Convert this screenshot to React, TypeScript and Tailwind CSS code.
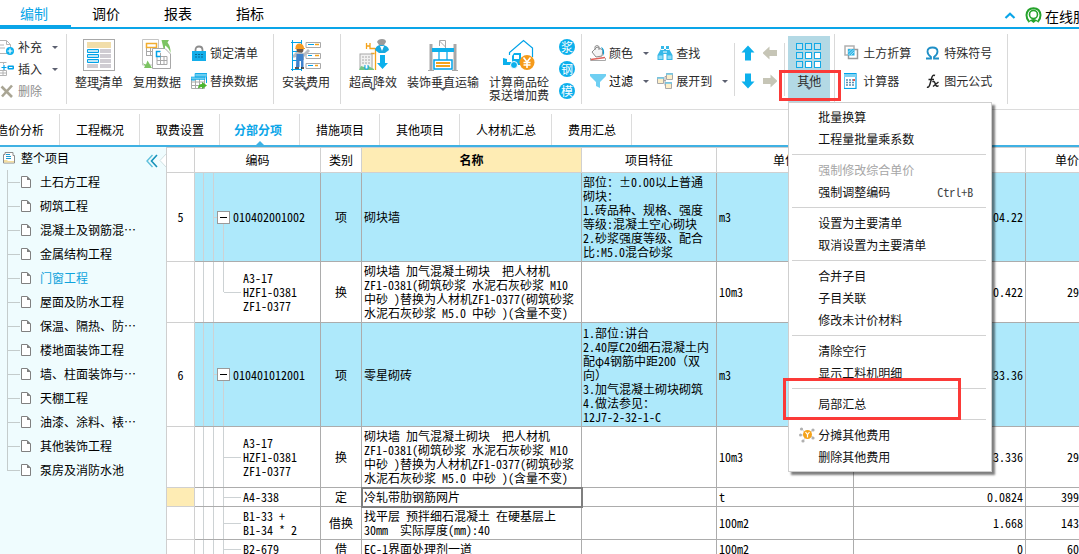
import React from 'react';

const BLUE = '#00a2e8';

/* ---------- icons ---------- */

function Caret() {
  return (
    <svg width="6" height="3" viewBox="0 0 6 3" className="shrink-0" aria-hidden="true">
      <path d="M0 0H6L3 3Z" fill="#5c6070" />
    </svg>
  );
}

function AddIcon() {
  return (
    <svg width="14" height="16" viewBox="0 0 14 16" aria-hidden="true">
      <path d="M0 1.5H6.5L10.500 5.500V14.500H0" fill="#fff" stroke="#b4b4b4" />
      <path d="M6.500 1.500V5.500H10.500M0 6H4M0 9H5" fill="none" stroke="#b4b4b4" />
      <circle cx="10" cy="12" r="4" fill="#0cb0ec" />
      <path d="M10 9.500V14.500M7.500 12H12.500" stroke="#fff" strokeWidth="1.200" />
    </svg>
  );
}

function InsertIcon() {
  return (
    <svg width="14" height="16" viewBox="0 0 14 16" aria-hidden="true">
      <path d="M0 1.500H6.500M3.500 1.500V3.500M0 9.500H6.500V14.500H0M0 12H6.500M3 9.500V14.500" fill="none" stroke="#b4b4b4" />
      <path d="M4 4V9M1.500 6.500H6.500" stroke={BLUE} strokeWidth="1.200" />
      <rect x="7.500" y="4.500" width="6.500" height="4" rx="1" fill={BLUE} />
      <path d="M9 6.500H12.500" stroke="#fff" />
    </svg>
  );
}

function RemoveIcon() {
  return (
    <svg width="14" height="16" viewBox="0 0 14 16" aria-hidden="true">
      <path d="M1.500 3.500L12 14M12 2.500L2 13.500" stroke="#a9a594" strokeWidth="2.600" />
    </svg>
  );
}

function TidyIcon() {
  return (
    <svg width="32" height="32" viewBox="0 0 32 32" aria-hidden="true">
      <rect x=".5" y=".5" width="31" height="31" fill="#fff" stroke="#a8a8a8" />
      <rect x="4" y="3" width="24" height="6" fill="#f1dda9" />
      <path d="M17 10H28V14H17ZM17 15H28V19H17ZM17 20H28V24H17ZM4 25H15V29H4ZM17 25H28V29H17Z" fill="#cfccd2" />
      <path d="M4.500 10.500H15.500V13.500H4.500ZM4.500 15.500H15.500V18.500H4.500ZM4.500 20.500H15.500V23.500H4.500Z" fill="#bfe6f6" stroke={BLUE} />
    </svg>
  );
}

function ReuseIcon() {
  return (
    <svg width="32" height="32" viewBox="0 0 32 32" aria-hidden="true">
      <path d="M1.500 .5H17.500V26H1.500Z" fill="#fff" stroke="#c4c4c4" />
      <path d="M5 8.500H16M5 12.500H16M5 16.500H16M5.500 5V17M9.500 5V17M13.500 5V17" stroke="#a8a8a8" />
      <rect x="5.500" y="4.500" width="10" height="4" fill="#fff" stroke="#f2ad2e" strokeWidth="1.500" />
      <path d="M11.500 9.500H24L29.500 15V29.500H11.500Z" fill="#fff" stroke="#a8a8a8" />
      <path d="M16 17.500H26V25.500H16ZM16 21.500H26M19.500 14V25M23 17V25" fill="none" stroke="#a8a8a8" />
      <path d="M19.500 12.500H15.500V17.500H19.500" fill="none" stroke={BLUE} strokeWidth="1.500" />
      <path d="M24 9.500H22.500L20.500 1H28L26.500 3.500Q30 8 29.500 14Q28 8.500 24 6.500Z" fill="#7cc462" />
      <path d="M.5 17.500L1 22Q2.500 25.500 5 25.500L6.500 21.500L11 29H3L4 27Q1 24.500 .5 17.500Z" fill="#7cc462" />
    </svg>
  );
}

function LockIcon() {
  return (
    <svg width="16" height="16" viewBox="0 0 16 16" aria-hidden="true">
      <path d="M4.500 7V5Q4.500 1.500 8 1.500T11.500 5V7" fill="none" stroke="#8c8c8c" strokeWidth="1.800" />
      <rect x="1" y="6" width="14" height="10" fill="#13aeea" />
      <path d="M4 9.500H12M4 12H12" stroke="#0a6a95" strokeDasharray="2 1" />
    </svg>
  );
}

function ReplaceIcon() {
  return (
    <svg width="16" height="16" viewBox="0 0 16 16" aria-hidden="true">
      <path d="M.5 4.500H13.500V15.500H.5ZM.5 9H13M.5 12.500H10M4.500 5V15M8.500 5V15" fill="#fff" stroke="#a8a8a8" />
      <path d="M4.500 .5H15.500V10M.5 4.500V7H4" fill="none" stroke={BLUE} />
      <path d="M4 .5H16V4H4ZM0 4H14V6.500H0Z" fill="#6bcdf0" stroke={BLUE} strokeWidth=".6" />
      <path d="M7 15.500Q7 11 11 11V9L16 12.500L11 16V14Q8.500 14 7 15.500Z" fill="#4cb52e" />
    </svg>
  );
}

function InstallIcon() {
  return (
    <svg width="32" height="32" viewBox="0 0 32 32" aria-hidden="true">
      <path d="M2.500 1V32M11.500 1V32M1 3.500H12M2 12.500H12M2 21.500H12M1 30.500H12" stroke={BLUE} />
      <path d="M16 3.500H30.500V8.500H16ZM16 14.500H30.500V19.500H16ZM16 24.500H30.500V29.500H16Z" fill="#fff" stroke="#a8a8a8" />
      <path d="M18 5.500H24M18 16.500H22M18 26.500H23" stroke={BLUE} />
      <path d="M25 5.500H29M25 16.500H29M25 26.500H28" stroke="#f5a31a" strokeWidth="1.500" />
      <circle cx="10" cy="10.500" r="3.500" fill="#6e5a4c" />
      <path d="M5.500 9Q5.500 4.500 9.500 4.500T14 9H15V10H5Z" fill="#f59a22" />
      <path d="M3 16L6 13L14 14L18 10L20 12L14 18V21H6V18Q2 20 3 16Z" fill="#b9bdc3" />
      <path d="M6.500 15H13.500V28H11V22H9.500V28H6Z" fill="#3e82cc" />
      <path d="M5 29H9M11 29H14" stroke="#222" strokeWidth="1.500" />
    </svg>
  );
}

function HighIcon() {
  return (
    <svg width="32" height="32" viewBox="0 0 32 32" aria-hidden="true">
      <path d="M9.500 4V10M13 4V10M9.500 7H13V9.500H18M18.500 9V31M14 14.500H17.500M14.500 14V31" fill="none" stroke="#f5a31a" strokeWidth="1.300" />
      <rect x="3" y="15" width="12" height="15" fill="#f1f1f1" stroke="#a8a8a8" />
      <path d="M5 18H13M5 21H13M5 24H13" stroke="#a8a8a8" strokeDasharray="2 1" />
      <path d="M2 31L4 27L7 28L10 26L13 28L17 30V31Z" fill="#75c486" />
      <path d="M8 26V30H11V26" stroke={BLUE} fill="#fff" />
      <path d="M20 3Q21 0 25 0T29 3L27 6Q25 8 22 6Z" fill="#9b9b9b" />
      <path d="M18 11Q19 6 24 6Q31 6 32 11L28 14H22Z" fill="#18a9df" />
      <path d="M23 7L25 12L27 7Z" fill="#fff" />
      <path d="M23 16H28V24H31L25.500 30L20 24H23Z" fill="#0cb0ec" />
    </svg>
  );
}

function DecorIcon() {
  return (
    <svg width="32" height="32" viewBox="0 0 32 32" aria-hidden="true">
      <path d="M4 5V31M28 5V31" stroke="#a8a8a8" strokeWidth="3" />
      <path d="M1 31.500H7M25 31.500H31" stroke="#a8a8a8" />
      <path d="M12.500 7V1.500H18.500V9M12.500 2L18.500 8" fill="none" stroke="#a8a8a8" />
      <rect x="5" y="9" width="22" height="4" fill="#0cb0ec" />
      <path d="M12 13V21M20 13V21" stroke={BLUE} strokeWidth="1.200" />
      <rect x="7" y="21" width="18" height="9" fill="#fff" stroke={BLUE} strokeWidth="1.500" />
      <path d="M9 24H23M9 27H23" stroke="#f5a31a" strokeWidth="2" />
    </svg>
  );
}

function PumpIcon() {
  return (
    <svg width="32" height="32" viewBox="0 0 32 32" aria-hidden="true">
      <path d="M6.500 16V13.500L20.500 1.500L29.500 9V18" fill="none" stroke={BLUE} strokeWidth="1.200" />
      <path d="M0 19L4 20V23H9V17L11 14H18V26H0Z" fill="#0cb0ec" />
      <rect x="11" y="16" width="5" height="4" fill="#fff" />
      <circle cx="11" cy="26" r="3.500" fill="#0cb0ec" stroke="#fff" />
      <circle cx="24" cy="23.500" r="7.500" fill="#f59a1a" />
      <path d="M20.500 18.500L24 23L27.500 18.500M24 23V29M20.500 23.500H27.500M20.500 26H27.500" fill="none" stroke="#fff" strokeWidth="1.600" />
    </svg>
  );
}

function ColorIcon() {
  return (
    <svg width="16" height="16" viewBox="0 0 16 16" aria-hidden="true">
      <path d="M2 7L7 2L13 5L12 11L6 12Z" fill="#f4f4f4" stroke="#8c8c8c" />
      <path d="M5 5V1.500Q7 -.5 9 1.500V5" fill="none" stroke="#8c8c8c" />
      <path d="M11 2Q15 3 14 11Q12.500 8 12.500 5Z" fill="#0c9fd6" />
      <path d="M.5 13V15.500H15.500V13" fill="#fff" stroke="#a8a8a8" />
      <path d="M1 14.500Q8 13.500 15 12.500" stroke="#e0625a" strokeWidth="1.300" fill="none" />
    </svg>
  );
}

function FilterIcon() {
  return (
    <svg width="16" height="16" viewBox="0 0 16 16" aria-hidden="true">
      <path d="M0 1H16V3L10 9V15L6 13V9L0 3Z" fill="#6fcff2" />
    </svg>
  );
}

function FindIcon() {
  return (
    <svg width="16" height="16" viewBox="0 0 16 16" aria-hidden="true">
      <path d="M4 1H7V4H9V1H12V4L15.500 10V15H9.500V9H6.500V15H.5V10L4 4Z" fill="#35b8e8" />
      <path d="M1.500 10.500H5.500V14H1.500ZM10.500 10.500H14.500V14H10.500Z" fill="#8fdcf6" />
      <path d="M4 4.500H7M9 4.500H12M6 7H10" stroke="#fff" />
    </svg>
  );
}

function ExpandIcon() {
  return (
    <svg width="16" height="16" viewBox="0 0 16 16" aria-hidden="true">
      <path d="M6 7.500H9M8 7.500V12.500H9M8 7.500V3.500H9" fill="none" stroke="#a8a8a8" />
      <path d="M.5 4.500H6.500V10.500H.5ZM9.500 .5H15.500V6.500H9.500ZM8.500 9.500H14.500V15.500H8.500Z" fill="#fdeec8" stroke="#a8a8a8" />
      <path d="M0 5H7M9 1H16M8 10H15" stroke="#6cc7ea" strokeWidth="1.500" />
    </svg>
  );
}

function ArrowIcon({ dir, color }: { dir: number; color: string }) {
  return (
    <svg width="14" height="16" viewBox="0 0 14 16" aria-hidden="true">
      <path d="M7 .5L13.500 7.500H10V15.500H4V7.500H.5Z" fill={color} transform={`rotate(${dir} 7 8)`} />
    </svg>
  );
}

function GridIcon() {
  const cells = [0, 1, 2].flatMap((r) => [0, 1, 2].map((c) => [c, r]));
  return (
    <svg width="26" height="26" viewBox="0 0 26 26" aria-hidden="true">
      {cells.map(([c, r]) => (
        <rect key={`${c}-${r}`} x={0.5 + c * 9} y={0.5 + r * 9} width="6" height="6" fill={r > 0 && c > 0 ? '#fff' : '#c3e3ee'} stroke="#12a9e6" />
      ))}
    </svg>
  );
}

function EarthIcon() {
  return (
    <svg width="16" height="16" viewBox="0 0 16 16" aria-hidden="true">
      <rect x="1" y="1" width="9" height="9" fill="#fff" stroke="#b0b0b0" strokeWidth="1.500" />
      <rect x="4.500" y="4.500" width="9" height="9" fill="#fff" stroke="#9a9a9a" strokeWidth="1.500" />
      <rect x="4" y="4" width="6.500" height="6.500" fill="#2cb3e4" />
      <path d="M4 7.500L7.500 4M4.500 10L10 4.500M7 10L10 7" stroke="#bfeafa" strokeWidth=".8" />
    </svg>
  );
}

function CalcIcon() {
  return (
    <svg width="16" height="16" viewBox="0 0 16 16" aria-hidden="true">
      <rect x="0" y=".5" width="12" height="15" fill="#fff" stroke={BLUE} strokeWidth="1.200" />
      <rect x="0" y="1" width="12" height="3" fill="#7fd2f1" />
      <path d="M2 7H11M2 9.500H11M2 12H11" stroke="#5a8fb0" strokeWidth="1.300" strokeDasharray="2 1" />
      <path d="M9 6H11V8H9Z" fill="#e8594f" />
    </svg>
  );
}

function OmegaIcon() {
  return (
    <svg width="16" height="16" viewBox="0 0 16 16" aria-hidden="true">
      <path d="M1 13.500H6V12Q2.500 9.500 2.500 6.500Q2.500 2.500 7.500 2.500T12.500 6.500Q12.500 9.500 9 12V13.500H14" fill="none" stroke="#1f8fc6" strokeWidth="1.800" />
    </svg>
  );
}

function FxIcon() {
  return (
    <svg width="16" height="16" viewBox="0 0 16 16" aria-hidden="true">
      <path d="M2 14Q4 15 5 11L7 4Q8 1.500 10 2.500M3.500 6.500H9M7.500 9Q9 7.500 10 10L11 12.500Q12 14 13.500 12.500M13.500 9L8 13.500" fill="none" stroke="#222" strokeWidth="1.400" />
    </svg>
  );
}

function HeadsetIcon() {
  return (
    <svg width="17" height="17" viewBox="0 0 17 17" className="shrink-0" aria-hidden="true">
      <path d="M4 14.500Q1.500 12 1.500 8Q2 1.500 8.500 1.200Q15 1.500 15.500 8Q15.500 12 13 14.500" fill="none" stroke="#26a32c" strokeWidth="2" />
      <circle cx="8.500" cy="7.500" r="4" fill="none" stroke="#26a32c" strokeWidth="1.600" />
      <path d="M3 16Q5 12 8.500 12T14 16L11 14L8.500 16L6 14Z" fill="#26a32c" />
    </svg>
  );
}

function ProjectIcon() {
  return (
    <svg width="12" height="13" viewBox="0 0 12 13" aria-hidden="true">
      <path d="M.5 3.500V12H11.500V4.500H10V1.500H2V3.500Z" fill="#fff" stroke="#8c8c8c" />
      <path d="M3 3.500H7M3 5.500H8M3 7.500H8" stroke="#1b9bd0" />
      <path d="M1 9H4L5 10H11V11.500H1Z" fill="#f3dea0" />
    </svg>
  );
}

function DocIcon() {
  return (
    <svg width="10" height="12" viewBox="0 0 10 12" className="shrink-0" aria-hidden="true">
      <path d="M.5 .5H6L9.500 4V11.500H.5Z" fill="#fff" stroke="#808080" />
      <path d="M6 0L10 4H6Z" fill="#808080" />
    </svg>
  );
}

function SplitIcon() {
  return (
    <svg width="16" height="16" viewBox="0 0 16 16" aria-hidden="true">
      <path d="M3 2L8 8L14 3M1 8H8L14 10M4 14L8 8" stroke="#d4d4d4" fill="none" />
      <g fill="#b0b0b0">
        <circle cx="2.500" cy="2" r="1.600" />
        <circle cx="14" cy="3" r="1.600" />
        <circle cx="1.500" cy="8" r="1.500" />
        <circle cx="14" cy="11" r="1.600" />
        <circle cx="4" cy="14" r="1.600" />
      </g>
      <circle cx="8.500" cy="7.500" r="4.500" fill="#f5a31a" />
      <path d="M6.500 5L8.500 7.500L10.500 5M8.500 7.500V10.500" stroke="#fff" fill="none" strokeWidth="1.200" />
    </svg>
  );
}

/* ---------- ribbon ---------- */

function Divider({ short }: { short?: boolean }) {
  return <div className={short ? 'mt-[14px] h-[53px] w-px shrink-0 bg-[#d9d9d9]' : 'mt-[5px] h-[70px] w-px shrink-0 bg-[#d9d9d9]'} />;
}

function BigButton({ icon, lines, caret }: { icon: React.ReactNode; lines: string[]; caret?: boolean }) {
  return (
    <button className="flex shrink-0 flex-col items-center pt-[10px]">
      {icon}
      <span className="mt-[4px] flex flex-col leading-[13px]">
        {lines.map((l) => (
          <span key={l}>{l}</span>
        ))}
      </span>
      {caret && <Caret />}
    </button>
  );
}

function SmallButton({ icon, label, caret, strong }: { icon: React.ReactNode; label: string; caret?: boolean; strong?: boolean }) {
  return (
    <button className="flex h-7 items-center gap-[3px]">
      {icon}
      <span className={strong ? 'text-black' : ''}>{label}</span>
      {caret && (
        <span className="ml-[7px]">
          <Caret />
        </span>
      )}
    </button>
  );
}

const MENU: { label: string; off?: boolean; key?: string; icon?: boolean; marked?: boolean }[][] = [
  [{ label: '批量换算' }, { label: '工程量批量乘系数' }],
  [{ label: '强制修改综合单价', off: true }, { label: '强制调整编码', key: 'Ctrl+B' }],
  [{ label: '设置为主要清单' }, { label: '取消设置为主要清单' }],
  [{ label: '合并子目' }, { label: '子目关联' }, { label: '修改未计价材料' }],
  [{ label: '清除空行' }, { label: '显示工料机明细' }],
  [{ label: '局部汇总', marked: true }],
  [{ label: '分摊其他费用', icon: true }, { label: '删除其他费用' }],
];

function OtherMenu() {
  return (
    <div className="absolute left-0 top-[66px] z-20 w-[204px] border border-[#cfcfcf] bg-white py-[3px] text-[#111] shadow-[3px_3px_2px_rgba(0,0,0,0.5)]">
      {MENU.map((group, i) => (
        <div key={i}>
          {i > 0 && (
            <div className="flex h-[9px] items-center pl-[3px] pr-[5px]">
              <div className="h-px w-full bg-[#d2d2d2]" />
            </div>
          )}
          {group.map((m) => (
            <button
              key={m.label}
              disabled={m.off}
              className="relative flex h-[22px] w-full items-center pr-[18px] text-left disabled:text-[#a6a6a6]"
            >
              <span className="flex w-[29px] justify-center pl-[6px]">{m.icon && <SplitIcon />}</span>
              <span>{m.label}</span>
              {m.key && <span className="ml-auto text-[#444]">{m.key}</span>}
              {m.marked && <span className="absolute -left-[6px] -top-[15px] h-[42px] w-[178px] border-[3px] border-[#fb3a38]" />}
            </button>
          ))}
        </div>
      ))}
    </div>
  );
}

function Ribbon() {
  return (
    <div className="relative z-10 flex h-[81px] shrink-0 items-start whitespace-nowrap border-b border-[#dcdcdc] bg-white text-[#2b2b2b]">
      <div className="flex w-[66px] shrink-0 flex-col pt-[7px]">
        <button className="flex h-[22px] items-center gap-1 pr-2">
          <AddIcon />
          <span className="mr-auto">补充</span>
          <Caret />
        </button>
        <button className="flex h-[22px] items-center gap-1 pr-2">
          <InsertIcon />
          <span className="mr-auto">插入</span>
          <Caret />
        </button>
        <button disabled className="flex h-[22px] items-center gap-1 text-[#8e8e8e]">
          <RemoveIcon />
          <span>删除</span>
        </button>
      </div>
      <Divider />
      <div className="flex shrink-0 gap-[10px] pl-2 pr-[15px]">
        <BigButton icon={<TidyIcon />} lines={['整理清单']} caret />
        <BigButton icon={<ReuseIcon />} lines={['复用数据']} />
        <div className="flex flex-col pt-[10px]">
          <SmallButton icon={<LockIcon />} label="锁定清单" />
          <SmallButton icon={<ReplaceIcon />} label="替换数据" />
        </div>
      </div>
      <Divider />
      <div className="flex shrink-0 pl-2 pr-[10px]">
        <BigButton icon={<InstallIcon />} lines={['安装费用']} caret />
      </div>
      <Divider />
      <div className="flex shrink-0 gap-[10px] pl-2 pr-[6px]">
        <BigButton icon={<HighIcon />} lines={['超高降效']} caret />
        <BigButton icon={<DecorIcon />} lines={['装饰垂直运输']} caret />
        <BigButton icon={<PumpIcon />} lines={['计算商品砼', '泵送增加费']} />
        <div className="flex flex-col gap-[6px] pt-[10px]">
          {['浆', '钢', '模'].map((c) => (
            <button key={c} className="flex size-4 items-center justify-center rounded-full bg-[#0cb0ec] leading-none text-white">
              {c}
            </button>
          ))}
        </div>
      </div>
      <Divider />
      <div className="flex shrink-0 gap-2 pl-2 pr-[6px] pt-[10px]">
        <div className="flex flex-col">
          <SmallButton icon={<ColorIcon />} label="颜色" caret />
          <SmallButton icon={<FilterIcon />} label="过滤" caret strong />
        </div>
        <div className="flex flex-col">
          <SmallButton icon={<FindIcon />} label="查找" />
          <SmallButton icon={<ExpandIcon />} label="展开到" caret />
        </div>
      </div>
      <Divider short />
      <div className="grid shrink-0 grid-cols-2 gap-x-2 pl-[6px] pr-[7px] pt-[10px]">
        <button aria-label="上移" className="flex h-7 items-center"><ArrowIcon dir={0} color="#0cb0ec" /></button>
        <button aria-label="左移" className="flex h-7 items-center"><ArrowIcon dir={-90} color="#c6c5b6" /></button>
        <button aria-label="下移" className="flex h-7 items-center"><ArrowIcon dir={180} color="#0cb0ec" /></button>
        <button aria-label="右移" className="flex h-7 items-center"><ArrowIcon dir={90} color="#c6c5b6" /></button>
      </div>
      <Divider short />
      <div className="shrink-0 pl-[3px] pr-1 pt-[7px]">
        <div className="relative">
          <button className="flex h-[66px] w-[42px] flex-col items-center bg-[#b3d9e5] pt-[7px]">
            <GridIcon />
            <span className="mt-[5px] leading-[13px]">其他</span>
            <Caret />
          </button>
          <OtherMenu />
          <span className="pointer-events-none absolute -left-[9px] top-[34px] z-30 h-[31px] w-[62px] border-[3px] border-[#fb3a38]" />
        </div>
      </div>
      <Divider />
      <div className="flex shrink-0 gap-[14px] pl-[9px] pr-[15px] pt-[10px]">
        <div className="flex flex-col">
          <SmallButton icon={<EarthIcon />} label="土方折算" />
          <SmallButton icon={<CalcIcon />} label="计算器" />
        </div>
        <div className="flex flex-col">
          <SmallButton icon={<OmegaIcon />} label="特殊符号" />
          <SmallButton icon={<FxIcon />} label="图元公式" />
        </div>
      </div>
      <Divider />
    </div>
  );
}

/* ---------- sidebar ---------- */

const TREE = [
  '土石方工程', '砌筑工程', '混凝土及钢筋混…', '金属结构工程', '门窗工程', '屋面及防水工程', '保温、隔热、防…',
  '楼地面装饰工程', '墙、柱面装饰与…', '天棚工程', '油漆、涂料、裱…', '其他装饰工程', '泵房及消防水池',
];

function Sidebar() {
  return (
    <aside className="relative w-[166px] shrink-0 bg-[#effcfe]">
      <div className="flex h-[23px] items-center gap-[6px] pb-[2px] pl-[3px]">
        <ProjectIcon />
        <span>整个项目</span>
      </div>
      <ul>
        {TREE.map((t, i) => (
          <li key={t} className="flex h-6 items-stretch pl-[7px]">
            <span className="flex flex-col" aria-hidden="true">
              <span className="h-[13px] w-[13px] border-b border-l border-[#c4cccc]" />
              {i < TREE.length - 1 && <span className="w-px grow bg-[#c4cccc]" />}
            </span>
            <a href="#" className={i === 4 ? 'flex items-center gap-[9px] pl-px text-[#10a3dc]' : 'flex items-center gap-[9px] pl-px text-black'}>
              <DocIcon />
              {t}
            </a>
          </li>
        ))}
      </ul>
      <button aria-label="收起" className="absolute right-0 top-[5px] flex items-center">
        <svg width="12" height="14" viewBox="0 0 12 14" aria-hidden="true">
          <path d="M6.500 1L1 7L6.500 13" fill="none" stroke="#5fc0dc" strokeWidth="1.400" />
          <path d="M11 1L5.500 7L11 13" fill="none" stroke="#1592ba" strokeWidth="1.600" />
        </svg>
        <svg width="8" height="18" viewBox="0 0 8 18" aria-hidden="true">
          <path d="M8 2L2 8.500L8 15Z" fill="#fff" />
          <path d="M8 2L2 8.500L8 15" fill="none" stroke="#cfe0e2" />
        </svg>
      </button>
    </aside>
  );
}

/* ---------- grid ---------- */

type Row = {
  no: string; code: string; parent?: boolean; last?: boolean; kind: string; name: string; desc: string;
  unit: string; qty: string; price: string; h: string; current?: boolean;
};

const REPLACED = '砌块墙 加气混凝土砌块  把人材机\nZF1-0381(砌筑砂浆 水泥石灰砂浆 M10\n中砂 )替换为人材机ZF1-0377(砌筑砂浆\n水泥石灰砂浆 M5.0 中砂 )(含量不变)';

const ROWS: Row[] = [
  {
    no: '5', code: '010402001002', parent: true, kind: '项', name: '砌块墙', unit: 'm3', qty: '04.22', price: '', h: 'h-[89px]',
    desc: '部位：±0.00以上普通\n砌块：\n1.砖品种、规格、强度\n等级:混凝土空心砌块\n2.砂浆强度等级、配合\n比:M5.0混合砂浆',
  },
  { no: '', code: 'A3-17\nHZF1-0381\nZF1-0377', last: true, kind: '换', name: REPLACED, desc: '', unit: '10m3', qty: '0.422', price: '29', h: 'h-[61px]' },
  {
    no: '6', code: '010401012001', parent: true, kind: '项', name: '零星砌砖', unit: 'm3', qty: '33.36', price: '', h: 'h-[104px]',
    desc: '1.部位:讲台\n2.40厚C20细石混凝土内\n配φ4钢筋中距200（双\n向）\n3.加气混凝土砌块砌筑\n4.做法参见：\n12J7-2-32-1-C',
  },
  { no: '', code: 'A3-17\nHZF1-0381\nZF1-0377', kind: '换', name: REPLACED, desc: '', unit: '10m3', qty: '3.336', price: '29', h: 'h-[61px]' },
  { no: '', code: 'A4-338', kind: '定', name: '冷轧带肋钢筋网片', desc: '', unit: 't', qty: '0.0824', price: '399', h: 'h-[19px]', current: true },
  { no: '', code: 'B1-33 +\nB1-34 * 2', kind: '借换', name: '找平层 预拌细石混凝土 在硬基层上\n30mm  实际厚度(mm):40', desc: '', unit: '100m2', qty: '1.668', price: '143', h: 'h-[33px]' },
  { no: '', code: 'B2-679', kind: '借', name: 'EC-1界面处理剂一道', desc: '', unit: '100m2', qty: '0', price: '60', h: 'h-[19px]' },
];

function CodeCell({ row }: { row: Row }) {
  return (
    <div className="flex h-full items-stretch">
      <span className="w-[9px] border-r border-[#cdd2d4]" />
      <span className="w-[10px] border-r border-[#cdd2d4]" />
      {row.parent ? (
        <>
          <span className="h-px w-[3px] self-center bg-[#cdd2d4]" />
          <span className="flex w-[13px] flex-col">
            <span className="flex-1" />
            <button aria-label="折叠" className="flex size-[13px] items-center justify-center border border-[#9a9a9a] bg-white">
              <span className="h-px w-[7px] bg-black" />
            </button>
            <span className="w-[7px] flex-1 border-r border-[#cdd2d4]" />
          </span>
          <span className="self-center whitespace-pre pl-[3px]">{row.code}</span>
        </>
      ) : (
        <>
          <span className="flex w-[10px] flex-col">
            <span className="flex-1 border-r border-[#cdd2d4]" />
            <span className={row.last ? 'flex-1' : 'flex-1 border-r border-[#cdd2d4]'} />
          </span>
          <span className="h-px w-[17px] self-center bg-[#cdd2d4]" />
          <span className="self-center whitespace-pre pl-[2px]">{row.code}</span>
        </>
      )}
    </div>
  );
}

function Grid() {
  const head = 'h-[26px] border-y border-r border-[#d0d0d0] p-0 font-normal';
  const cell = 'border-b border-r border-[#acacac] py-0';
  return (
    <div className="min-w-0 grow overflow-hidden border-l border-[#cfcfcf]">
      <table className="w-full table-fixed border-separate border-spacing-0 leading-[14px]">
        <colgroup>
          <col className="w-[28px]" />
          <col className="w-[126px]" />
          <col className="w-[41px]" />
          <col className="w-[220px]" />
          <col className="w-[135px]" />
          <col className="w-[137px]" />
          <col className="w-[172px]" />
          <col />
        </colgroup>
        <thead>
          <tr>
            <th className={head} />
            <th className={head}>编码</th>
            <th className={head}>类别</th>
            <th className="h-[26px] border-y border-r border-[#d0d0d0] bg-[#feecb4] p-0 font-bold">名称</th>
            <th className={head}>项目特征</th>
            <th className={head}>单位</th>
            <th className={head} />
            <th className="h-[26px] border-y border-[#d0d0d0] p-0 text-right font-normal">单价</th>
          </tr>
        </thead>
        <tbody>
          {ROWS.map((r, i) => (
            <tr key={i} className={r.parent ? 'bg-[#aee9fb]' : 'bg-white'}>
              <td className={`${r.h} border-b border-r border-[#d0d0d0] p-0 text-center ${r.current ? 'bg-[#feecb4]' : 'bg-white'}`}>{r.no}</td>
              <td className={`${r.h} ${cell} px-0`}>
                <CodeCell row={r} />
              </td>
              <td className={`${cell} px-0 text-center`}>{r.kind}</td>
              <td className={`${cell} whitespace-pre pl-[2px] pr-0 ${r.current ? 'outline-2 -outline-offset-1 outline-[#7f7f7f]' : ''}`}>{r.name}</td>
              <td className={`${cell} whitespace-pre pl-px pr-0`}>{r.desc}</td>
              <td className={`${cell} pl-[2px] pr-0`}>{r.unit}</td>
              <td className={`${cell} pl-0 pr-[2px] text-right`}>{r.qty}</td>
              <td className="border-b border-[#acacac] p-0 text-right">{r.price}</td>
            </tr>
          ))}
        </tbody>
      </table>
    </div>
  );
}

/* ---------- page ---------- */

const TABS = ['工程概况', '取费设置', '分部分项', '措施项目', '其他项目', '人材机汇总', '费用汇总'];

export default function App() {
  return (
    <div className="flex h-screen flex-col overflow-hidden bg-white font-['Noto_Sans_Mono_CJK_SC','Noto_Sans_CJK_SC',sans-serif] text-[12px] leading-[14px] text-black">
      <header className="flex h-[29px] shrink-0 border-b-2 border-[#0aa5e8] text-[14px]">
        <nav className="-ml-[2px] flex">
          {['编制', '调价', '报表', '指标'].map((t, i) => (
            <button
              key={t}
              className={i === 0 ? 'w-[73px] border-b-2 border-[#0aa5e8] pr-px text-[#0aa5e8]' : 'w-[72px] border-b-2 border-transparent pr-[2px]'}
            >
              {t}
            </button>
          ))}
        </nav>
        <div className="ml-auto flex w-[75px] items-center gap-[3px] overflow-hidden whitespace-nowrap pt-1">
          <button aria-label="收起功能区" className="mr-[6px] shrink-0">
            <svg width="12" height="7" viewBox="0 0 12 7" aria-hidden="true">
              <path d="M1.500 6L6 1.800L10.500 6" fill="none" stroke="#0aa5e8" strokeWidth="2.200" />
            </svg>
          </button>
          <HeadsetIcon />
          <a href="#">在线服</a>
        </div>
      </header>

      <Ribbon />

      <nav className="flex h-[35px] shrink-0 items-end whitespace-nowrap">
        <button className="flex h-[31px] w-[60px] items-center justify-end border-r border-[#dcdcdc] pr-[15px]">造价分析</button>
        {TABS.map((t) =>
          t === '分部分项' ? (
            <button key={t} className="relative h-[31px] border-r border-[#dcdcdc] pl-[14px] pr-[17px] font-bold text-[#0aa5e8]">
              {t}
              <svg width="8" height="4" viewBox="0 0 8 4" className="absolute bottom-0 left-9" aria-hidden="true">
                <path d="M0 4L4 0L8 4Z" fill="#3fb1e3" />
              </svg>
            </button>
          ) : (
            <button key={t} className="h-[31px] border-r border-[#dcdcdc] pl-4 pr-[15px]">
              {t}
            </button>
          ),
        )}
      </nav>

      <main className="flex min-h-0 grow border-t-2 border-[#3fb1e3]">
        <Sidebar />
        <Grid />
      </main>
    </div>
  );
}
